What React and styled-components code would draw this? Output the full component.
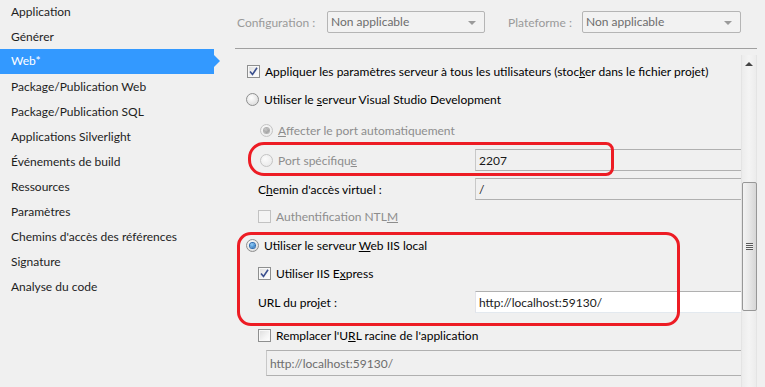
import React from 'react';
import styled, { createGlobalStyle } from 'styled-components';

const GlobalStyle = createGlobalStyle`
  html, body {
    margin: 0;
    padding: 0;
    background: #f0f0f0;
  }
  body {
    font-family: Lato, "Noto Sans", sans-serif;
    font-size: 12px;
    color: #000;
  }
`;

const Page = styled.div`
  display: flex;
  width: 765px;
  height: 387px;
  overflow: hidden;
  background: #f0f0f0;
`;

const Sidebar = styled.ul`
  list-style: none;
  margin: 0;
  padding: 0;
  width: 214px;
  flex: none;
`;

const NavItem = styled.li`
  position: relative;
  height: 25px;
  line-height: 24px;
  padding-left: 11px;
  color: ${p => (p.$active ? '#fff' : '#1e1e1e')};
  background: ${p => (p.$active ? '#3399ff' : 'transparent')};
  margin-top: ${p => (p.$active ? '-1px' : '0')};
  margin-bottom: ${p => (p.$active ? '1px' : '0')};

  &::after {
    content: '';
    display: ${p => (p.$active ? 'block' : 'none')};
    position: absolute;
    right: -6px;
    top: 6px;
    width: 6px;
    height: 12px;
    background: #3399ff;
    clip-path: polygon(0 0, 100% 50%, 0 100%);
  }
`;

const Main = styled.div`
  margin-left: 21px;
  flex: 1;
  display: flex;
  flex-direction: column;
`;

const Header = styled.div`
  display: flex;
  align-items: center;
  height: 49px;
  padding-left: 2px;
  padding-bottom: 4px;
  box-sizing: border-box;
  width: 522px;
  border-bottom: 1px solid #a0a0a0;
`;

const HeaderLabel = styled.span`
  color: #9a9a9a;
  width: ${p => p.$w}px;
`;

const Select = styled.div`
  position: relative;
  box-sizing: border-box;
  width: ${p => p.$w}px;
  height: 22px;
  margin-right: ${p => p.$mr || 0}px;
  border: 1px solid #b5b5b5;
  border-radius: 2px;
  background: #f2f2f2;
  color: #6d6d6d;
  line-height: 20px;
  padding-left: 3px;

  &::after {
    content: '';
    position: absolute;
    right: 8px;
    top: 9px;
    border-left: 4px solid transparent;
    border-right: 4px solid transparent;
    border-top: 4px solid #9a9a9a;
  }
`;

const Body = styled.div`
  position: relative;
  flex: 1;
  display: flex;
`;

const Rows = styled.div`
  width: 506px;
  display: flex;
  flex-direction: column;
  padding-top: 11px;
`;

const Row = styled.div`
  display: grid;
  grid-template-columns: ${p => (p.$field ? '240px 1fr' : '1fr')};
  align-items: center;
  height: 22px;
  margin-top: ${p => p.$gap || 0}px;
`;

const Option = styled.label`
  display: flex;
  align-items: center;
  gap: 5px;
  padding-left: ${p => p.$indent}px;
  color: ${p => (p.$disabled ? '#8d8d8d' : '#000')};
  white-space: nowrap;
`;

const Box = styled.span`
  width: 13px;
  height: 13px;
  box-sizing: border-box;
  flex: none;
  border: 1px solid ${p => (p.$disabled ? '#c2c2c2' : '#8e8f8f')};
  background: ${p =>
    p.$disabled
      ? '#f4f4f4'
      : 'linear-gradient(135deg, #dcdcdc 0%, #f4f4f4 60%, #ffffff 100%)'};
  box-shadow: inset 0 0 0 1px ${p => (p.$disabled ? '#f4f4f4' : '#f8f8f8')};
  display: flex;
  align-items: center;
  justify-content: center;
`;

const Radio = styled.span`
  width: 13px;
  height: 13px;
  box-sizing: border-box;
  flex: none;
  border-radius: 50%;
  border: 1px solid ${p => (p.$disabled ? '#c4c4c4' : '#8e8f8f')};
  background: ${p =>
    p.$disabled
      ? 'radial-gradient(circle at 40% 35%, #fbfbfb, #e6e6e6)'
      : 'radial-gradient(circle at 40% 35%, #ffffff, #d4d4d4)'};
  display: flex;
  align-items: center;
  justify-content: center;

  &::after {
    content: '';
    display: ${p => (p.$checked ? 'block' : 'none')};
    width: 5px;
    height: 5px;
    border-radius: 50%;
    background: ${p =>
      p.$disabled
        ? 'radial-gradient(circle at 40% 35%, #c8c8c8, #8a8a8a)'
        : 'radial-gradient(circle at 40% 35%, #8fd0ff, #1a5fa8)'};
    box-shadow: 0 0 0 1px ${p => (p.$disabled ? '#b0b0b0' : '#2a6ab0')};
  }
`;

const TextBox = styled.div`
  box-sizing: border-box;
  height: ${p => p.$h || 22}px;
  margin-left: ${p => p.$ml || 0}px;
  border: 1px solid #b0b0b0;
  border-right: none;
  border-bottom-color: ${p => (p.$white ? '#e3e9ef' : '#b0b0b0')};
  border-left-color: ${p => (p.$white ? '#e2e3ea' : '#c8c8c8')};
  background: ${p => (p.$white ? '#fff' : '#f0f0f0')};
  color: ${p => (p.$muted ? '#6d6d6d' : '#1a1a1a')};
  padding-left: 3px;
  display: flex;
  align-items: center;
`;

const FieldLabel = styled.span`
  padding-left: ${p => p.$indent}px;
`;

const Scrollbar = styled.div`
  width: 16px;
  margin-top: 6px;
  box-sizing: border-box;
  border-left: 1px solid #e4e4e4;
  border-right: 1px solid #e4e4e4;
  background: linear-gradient(90deg, #ececec, #f4f4f4 50%, #ececec);
  display: flex;
  flex-direction: column;
  align-items: center;
`;

const UpArrow = styled.div`
  height: 17px;
  display: flex;
  align-items: center;
  justify-content: center;
  width: 100%;

  &::before {
    content: '';
    border-left: 4px solid transparent;
    border-right: 4px solid transparent;
    border-bottom: 4px solid #444;
  }
`;

const Thumb = styled.div`
  margin-top: 110px;
  width: 15px;
  height: 129px;
  box-sizing: border-box;
  border: 1px solid #979797;
  border-radius: 2px;
  background: linear-gradient(90deg, #f3f3f3 0%, #e8e8e8 45%, #d6d6d6 100%);
  display: flex;
  align-items: center;
  justify-content: center;
`;

const Grip = styled.div`
  width: 7px;
  height: 7px;
  background: repeating-linear-gradient(180deg, #5a5a5a 0 1px, #f0f0f0 1px 2px);
`;

const Callout = styled.div`
  position: absolute;
  left: ${p => p.$x}px;
  top: ${p => p.$y}px;
  width: ${p => p.$w}px;
  height: ${p => p.$h}px;
  box-sizing: border-box;
  border: 3px solid #ed1c24;
  border-radius: ${p => p.$r};
  pointer-events: none;
`;

const Check = () => (
  <svg width="9" height="9" viewBox="0 0 9 9">
    <path d="M1 4.5 L3.5 7.5 L8 0.8" fill="none" stroke="#3a4f8e" strokeWidth="1.6" />
  </svg>
);

const navItems = [
  'Application',
  'Générer',
  'Web*',
  'Package/Publication Web',
  'Package/Publication SQL',
  'Applications Silverlight',
  'Événements de build',
  'Ressources',
  'Paramètres',
  "Chemins d'accès des références",
  'Signature',
  'Analyse du code',
];

export default function App() {
  return (
    <Page>
      <GlobalStyle />
      <Sidebar>
        {navItems.map(n => (
          <NavItem key={n} $active={n === 'Web*'}>{n}</NavItem>
        ))}
      </Sidebar>
      <Main>
        <Header>
          <HeaderLabel $w={90}>Configuration :</HeaderLabel>
          <Select $w={158} $mr={23}>Non applicable</Select>
          <HeaderLabel $w={74}>Plateforme :</HeaderLabel>
          <Select $w={159}>Non applicable</Select>
        </Header>
        <Body>
          <Rows>
            <Row>
              <Option $indent={12}>
                <Box><Check /></Box>
                <span>Appliquer les paramètres serveur à tous les utilisateurs (stoc<u>k</u>er dans le fichier projet)</span>
              </Option>
            </Row>
            <Row $gap={6}>
              <Option $indent={11}>
                <Radio />
                <span>Utiliser le <u>s</u>erveur Visual Studio Development</span>
              </Option>
            </Row>
            <Row $gap={9}>
              <Option $indent={25} $disabled>
                <Radio $checked $disabled />
                <span><u>A</u>ffecter le port automatiquement</span>
              </Option>
            </Row>
            <Row $gap={8} $field>
              <Option $indent={25} $disabled>
                <Radio $disabled />
                <span>Port spécifiqu<u>e</u></span>
              </Option>
              <TextBox>2207</TextBox>
            </Row>
            <Row $gap={7} $field>
              <FieldLabel $indent={23}>C<u>h</u>emin d'accès virtuel :</FieldLabel>
              <TextBox>/</TextBox>
            </Row>
            <Row $gap={5}>
              <Option $indent={23} $disabled>
                <Box $disabled />
                <span>Authentification NTL<u>M</u></span>
              </Option>
            </Row>
            <Row $gap={7}>
              <Option $indent={11}>
                <Radio $checked />
                <span>Utiliser le serveur <u>W</u>eb IIS local</span>
              </Option>
            </Row>
            <Row $gap={6}>
              <Option $indent={23}>
                <Box><Check /></Box>
                <span>Utiliser IIS E<u>x</u>press</span>
              </Option>
            </Row>
            <Row $gap={7} $field>
              <FieldLabel $indent={23}>URL du pro<u>j</u>et :</FieldLabel>
              <TextBox $white>http://localhost:59130/</TextBox>
            </Row>
            <Row $gap={11}>
              <Option $indent={23}>
                <Box />
                <span>Remplacer l'U<u>R</u>L racine de l'application</span>
              </Option>
            </Row>
            <Row $gap={4}>
              <TextBox $ml={31} $h={26} $muted>http://localhost:59130/</TextBox>
            </Row>
          </Rows>
          <Scrollbar>
            <UpArrow />
            <Thumb><Grip /></Thumb>
          </Scrollbar>
          <Callout $x={13} $y={93} $w={366} $h={34} $r="16px 8px 8px 16px" />
          <Callout $x={2} $y={183} $w={443} $h={94} $r="14px" />
        </Body>
      </Main>
    </Page>
  );
}
